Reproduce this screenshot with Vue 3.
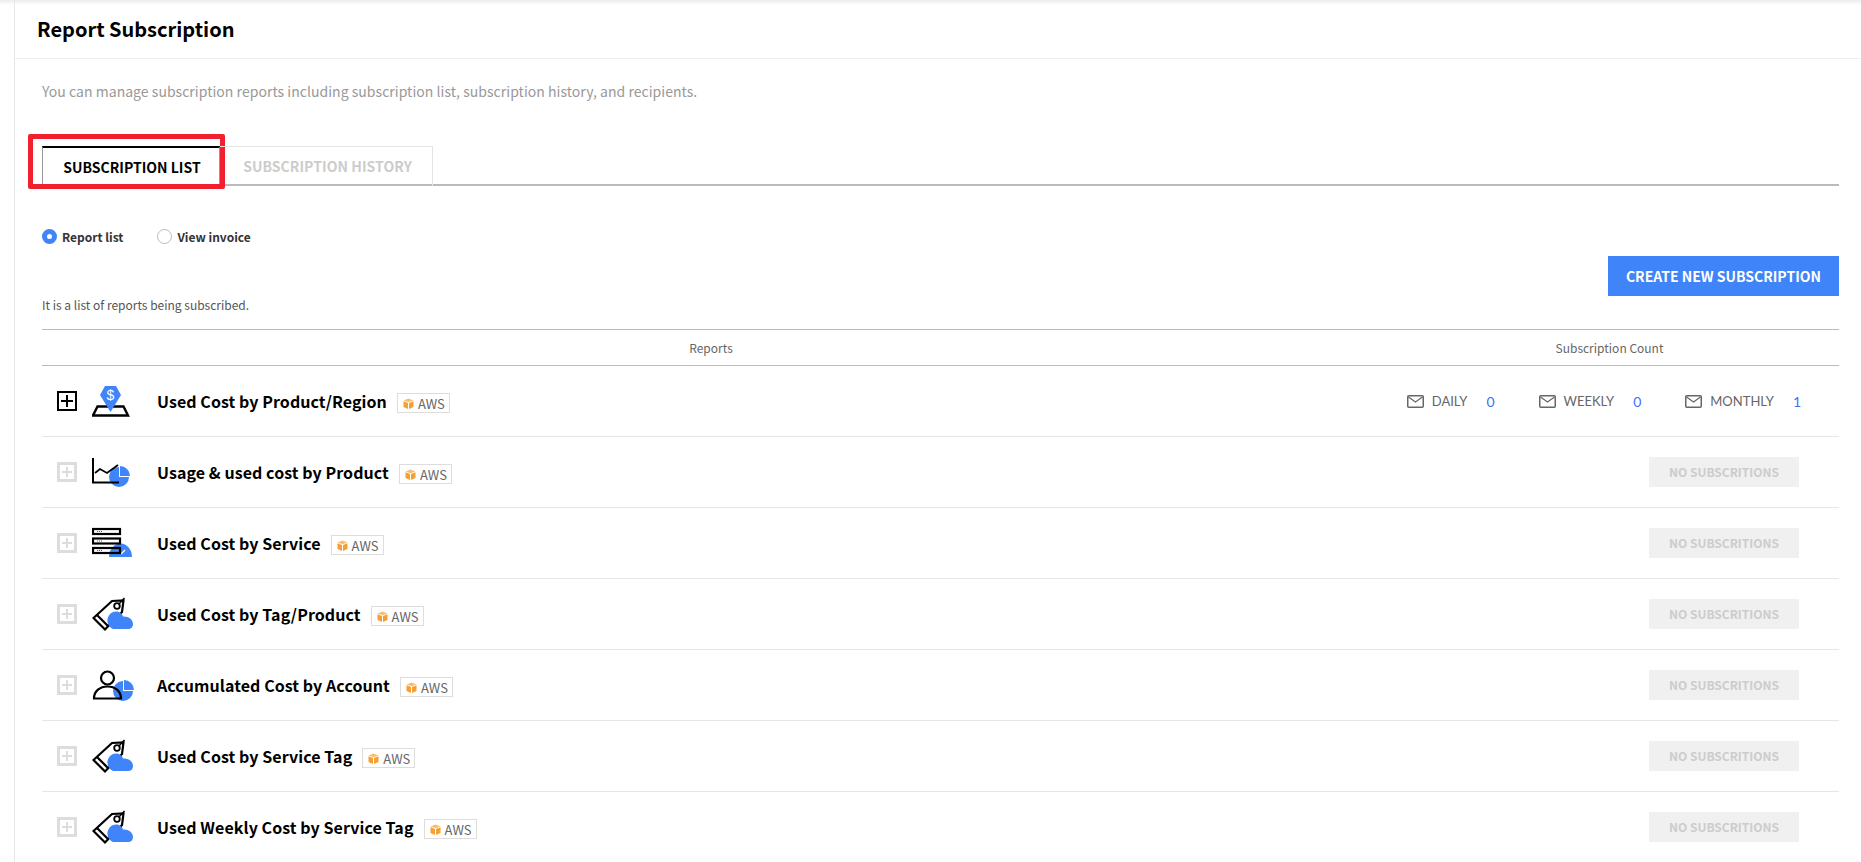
<script setup>
const rows = [
  { title: 'Used Cost by Product/Region', icon: 'map', open: true },
  { title: 'Usage & used cost by Product', icon: 'chart' },
  { title: 'Used Cost by Service', icon: 'rack' },
  { title: 'Used Cost by Tag/Product', icon: 'tag' },
  { title: 'Accumulated Cost by Account', icon: 'user' },
  { title: 'Used Cost by Service Tag', icon: 'tag' },
  { title: 'Used Weekly Cost by Service Tag', icon: 'tag' }
]
const counts = [
  { label: 'DAILY', value: 0 },
  { label: 'WEEKLY', value: 0 },
  { label: 'MONTHLY', value: 1 }
]
</script>

<template>
  <div class="page">
    <aside class="rail"></aside>
    <main class="main">
      <header class="header"><h1>Report Subscription</h1></header>
      <div class="content">
        <p class="desc">You can manage subscription reports including subscription list, subscription history, and recipients.</p>
        <div class="tabs">
          <div class="tab active"><span class="tab-text">SUBSCRIPTION LIST</span><span class="mark"></span></div>
          <div class="tab"><span class="tab-text">SUBSCRIPTION HISTORY</span></div>
        </div>
        <div class="radios">
          <label class="radio"><span class="dot on"></span>Report list</label>
          <label class="radio"><span class="dot"></span>View invoice</label>
        </div>
        <div class="toolbar">
          <span class="hint">It is a list of reports being subscribed.</span>
          <button class="create">CREATE NEW SUBSCRIPTION</button>
        </div>
        <div class="thead">
          <div>Reports</div>
          <div>Subscription Count</div>
        </div>
        <div v-for="row in rows" :key="row.title" class="row">
          <div class="left">
            <span class="toggle" :class="{ open: row.open }"></span>
            <svg class="icon" width="44" height="40" viewBox="0 0 44 40">
              <template v-if="row.icon === 'map'">
                <path d="M5.5 25.5H31.5L36 34.5H1Z" fill="none" stroke="#000" stroke-width="2.400" />
                <path d="M13 5H24L29 14L18.5 31L8 14Z" fill="#3f84f8" />
                <text x="18.5" y="18.5" text-anchor="middle" font-size="14" fill="#fff" font-family="Liberation Sans, sans-serif">$</text>
              </template>
              <template v-else-if="row.icon === 'chart'">
                <path d="M27 25V15A10 10 0 1 0 37 25Z" fill="#3f84f8" />
                <path d="M28 24V14A10 10 0 0 1 38 24Z" fill="#3f84f8" />
                <path d="M1 6V30.5H27" fill="none" stroke="#000" stroke-width="2" />
                <path d="M3 21L8 17L15 21L26 13" fill="none" stroke="#000" stroke-width="1.8" />
              </template>
              <template v-else-if="row.icon === 'rack'">
                <path d="M17 34A11.5 13.5 0 0 1 40 34Z" fill="#3f84f8" />
                <path d="M29 31L33 27" stroke="#fff" stroke-width="1.2" />
                <g fill="none" stroke="#000" stroke-width="2.200">
                  <rect x="1" y="6" width="27" height="5" />
                  <rect x="1" y="15.500" width="27" height="5" />
                  <rect x="1" y="25" width="27" height="5" />
                </g>
                <path d="M5 8.500H10M5 18H10M5 27.500H10" stroke="#555" stroke-width="1" stroke-dasharray="1 1" />
              </template>
              <template v-else-if="row.icon === 'tag'">
                <path d="M1.500 24L20 7L31.500 6.500L30 18L13 35.500Z" fill="#fff" stroke="#000" stroke-width="2.200" stroke-linejoin="miter" />
                <path d="M5 21L16 32" stroke="#000" stroke-width="2.200" />
                <path d="M21 35C17 33 15 29 15.500 25C16.500 20.500 20 17.500 24 17.500C27 17.500 30 19 31 22.500C36 22 41 25 41 30C41 33 39 35 36 35Z" fill="#3f84f8" />
                <circle cx="25" cy="12" r="2.800" fill="#fff" stroke="#000" stroke-width="1.800" />
                <path d="M26.500 10.500L32.500 4" stroke="#000" stroke-width="1.500" />
              </template>
              <template v-else>
                <path d="M31 26V16A10 10 0 1 0 41 26Z" fill="#3f84f8" />
                <path d="M32 25V15A10 10 0 0 1 42 25Z" fill="#3f84f8" />
                <circle cx="15.500" cy="13" r="6.500" fill="none" stroke="#000" stroke-width="2.200" />
                <path d="M2 33.500C2 26 8 21.500 15.500 21.500S29 26 29 33.500Z" fill="none" stroke="#000" stroke-width="2.200" />
              </template>
            </svg>
            <span class="title">{{ row.title }}</span>
            <span class="badge">
              <svg width="11" height="11" viewBox="0 0 11 11">
                <path d="M5.500 0.500L10.500 2.500L5.500 4.300L0.500 2.500Z" fill="#f8bd72" />
                <path d="M0.500 3.300L5 5V11L0.500 9Z" fill="#f5a030" />
                <path d="M10.500 3.300L6 5V11L10.500 9Z" fill="#f5a030" />
              </svg>
              AWS
            </span>
          </div>
          <div class="right">
            <template v-if="row.open">
              <div v-for="c in counts" :key="c.label" class="count">
                <svg width="17" height="13" viewBox="0 0 17 13">
                  <rect x="0.750" y="0.750" width="15.500" height="11.500" rx="1" fill="none" stroke="#666" stroke-width="1.500" />
                  <path d="M1.500 2L8.500 7L15.500 2" fill="none" stroke="#666" stroke-width="1.200" />
                </svg>
                <span class="label">{{ c.label }}</span>
                <span class="num">{{ c.value }}</span>
              </div>
            </template>
            <div v-else class="none">NO SUBSCRITIONS</div>
          </div>
        </div>
      </div>
    </main>
  </div>
</template>

<style>
html, body { margin: 0; height: 100%; overflow: hidden; background: #fff; }
</style>

<style scoped>
.page {
  display: flex;
  height: 862px;
  overflow: hidden;
  background: linear-gradient(#ececec, #fff 5px);
  font-family: "Noto Sans CJK KR", "Noto Sans", sans-serif;
  color: #000;
}
.rail { width: 14px; flex: none; border-right: 1px solid #e6e6e6; }
.main { flex: 1; min-width: 0; }
.header { height: 58px; border-bottom: 1px solid #eee; padding-left: 22px; display: flex; align-items: center; }
h1 { margin: -2px 0 0; font-size: 20px; font-weight: 700; }
.content { padding: 0 22px 0 27px; }
.desc { margin: 0; padding-top: 21px; height: 66px; box-sizing: border-box; font-size: 14px; line-height: 22px; letter-spacing: 0.033px; color: #999; }
.tabs { display: flex; height: 61px; padding-top: 21px; box-sizing: border-box; border-bottom: 2px solid #bbb; }
.tab {
  position: relative;
  box-sizing: border-box;
  height: 40px;
  width: 213px;
  padding-left: 3px;
  border: 1px solid #e4e4e4;
  border-bottom: 0;
  border-left: 0;
  font-size: 14px;
  font-weight: 700;
  letter-spacing: 0.05px;
  color: #ccc;
  text-align: center;
  line-height: 38px;
}
.tab.active {
  width: 178px;
  height: 41px;
  padding-left: 2px;
  border: 1px solid #999;
  border-top: 2px solid #000;
  border-bottom: 0;
  background: #fff;
  color: #000;
  letter-spacing: 0;
}
.mark {
  position: absolute;
  left: -15.5px;
  top: -14.5px;
  width: 197.5px;
  height: 55px;
  border: 5px solid #f0202e;
  border-radius: 2px;
  box-sizing: border-box;
}
.radios { display: flex; gap: 34px; padding-top: 40px; height: 20px; }
.radio { display: flex; align-items: center; gap: 5px; font-size: 12px; font-weight: 700; color: #333; height: 20px; }
.dot { width: 15px; height: 15px; border-radius: 50%; border: 1px solid #bbb; box-sizing: border-box; background: #fff; }
.dot.on { border: 5px solid #3f84f8; }
.toolbar { display: flex; justify-content: space-between; align-items: flex-start; margin-top: 10px; height: 73px; }
.hint { font-size: 12px; color: #555; line-height: 20px; margin-top: 39px; }
.create {
  width: 231px;
  height: 40px;
  border: 0;
  padding: 0;
  background: #3f84f8;
  color: #fff;
  font: 700 14px "Noto Sans CJK KR", sans-serif;
}
.thead {
  display: grid;
  grid-template-columns: 1338px 1fr;
  height: 35px;
  border-top: 1px solid #bbb;
  border-bottom: 1px solid #bbb;
  font-size: 12px;
  line-height: 35px;
  color: #666;
  text-align: center;
}
.row { display: flex; justify-content: space-between; align-items: center; height: 70px; border-bottom: 1px solid #e6e6e6; }
.left { display: flex; align-items: center; padding-left: 15px; }
.toggle {
  position: relative;
  width: 20px;
  height: 20px;
  box-sizing: border-box;
  border: 3px solid #ddd;
  margin-right: 15px;
  flex: none;
}
.toggle::before, .toggle::after { content: ""; position: absolute; background: #ddd; }
.toggle::before { left: 2px; right: 2px; top: 6px; height: 2px; }
.toggle::after { top: 2px; bottom: 2px; left: 6px; width: 2px; }
.toggle.open { border: 2px solid #000; }
.toggle.open::before, .toggle.open::after { background: #000; }
.toggle.open::before { left: 2px; right: 2px; top: 7px; }
.toggle.open::after { top: 2px; bottom: 2px; left: 7px; }
.icon { flex: none; margin-right: 21px; }
.title { font-size: 16px; font-weight: 700; line-height: 24px; letter-spacing: 0.07px; margin-right: 10px; }
.badge {
  display: flex;
  align-items: center;
  gap: 4px;
  height: 20px;
  box-sizing: border-box;
  padding: 0 4px 0 5px;
  margin-top: 4px;
  border: 1px solid #ddd;
  font: 13px "Noto Sans CJK KR", sans-serif;
  color: #666;
}
.right { display: flex; padding-right: 38px; }
.count { display: flex; align-items: center; margin-left: 44px; }
.label { margin-left: 8px; font: 13px Lato, sans-serif; color: #666; }
.num { margin-left: 19px; font: 14px Lato, sans-serif; color: #3f6ff8; }
.none {
  width: 150px;
  height: 30px;
  margin-right: 2px;
  background: #f0f0f0;
  color: #ccc;
  font-size: 12px;
  font-weight: 700;
  line-height: 30px;
  text-align: center;
}
</style>
